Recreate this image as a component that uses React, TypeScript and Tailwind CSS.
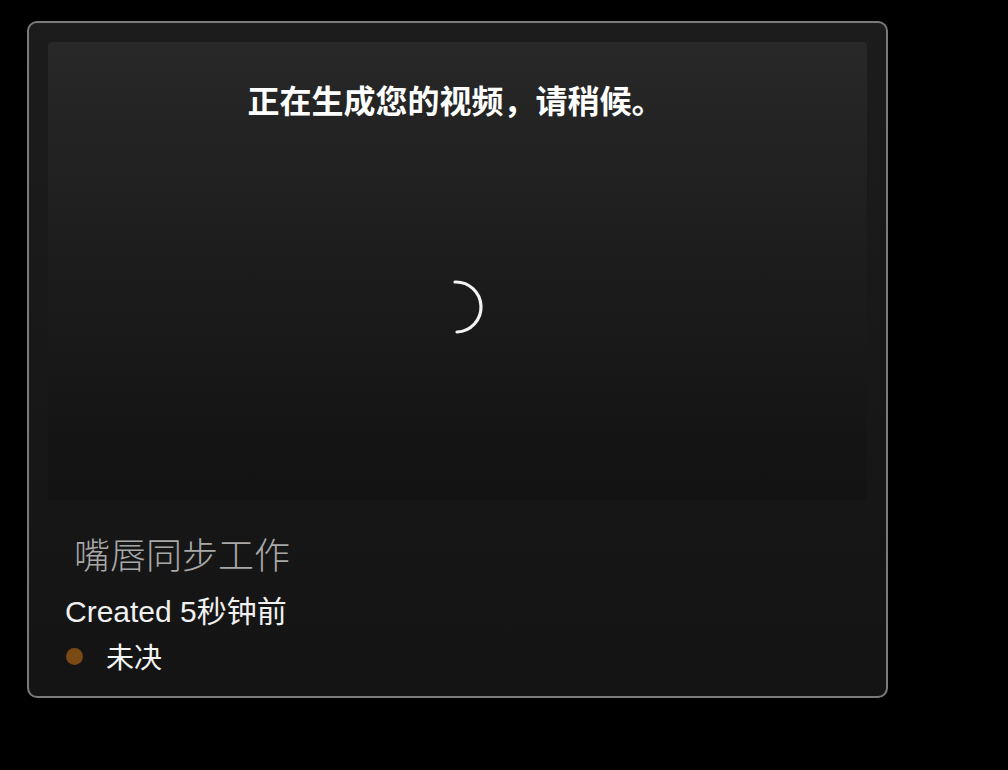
import React from 'react';

const cjk = { fontFamily: '"Noto Sans CJK SC", "Noto Sans", sans-serif' };
const mixed = { fontFamily: '"Liberation Sans", "Noto Sans CJK SC", sans-serif' };

function Spinner() {
  return (
    <svg width="60" height="60" viewBox="0 0 60 60" className="block">
      <path
        d="M26 5 A25 25 0 1 1 28 55"
        fill="none"
        stroke="#f2f2f2"
        strokeWidth="3.2"
        strokeLinecap="round"
      />
    </svg>
  );
}

export default function App() {
  return (
    <div className="w-[1008px] h-[770px] bg-black overflow-hidden" style={cjk}>
      <div className="ml-[27px] mt-[21px] w-[861px] h-[677px] rounded-[10px] border-2 border-[#7a7a7a] bg-gradient-to-b from-[#1c1c1c] to-[#141414] p-[19px] flex flex-col">
        {/* preview area */}
        <div className="h-[458px] rounded-[4px] bg-gradient-to-b from-[#282828] via-[#1c1c1c] to-[#121212] flex flex-col items-center">
          <div className="mt-[37px] pr-[4px] h-[40px] leading-[40px] text-[32px] font-bold text-white">
            正在生成您的视频，请稍候。
          </div>
          <div className="mt-[158px] ml-[2px]">
            <Spinner />
          </div>
        </div>

        {/* info */}
        <div className="pl-[26px] mt-[31px] h-[44px] leading-[44px] text-[36px] font-light text-[#a8a8a8]">
          嘴唇同步工作
        </div>
        <div className="pl-[17px] mt-[19px] h-[36px] leading-[36px] text-[30px] text-[#f0f0f0]" style={mixed}>
          Created 5秒钟前
        </div>
        <div className="pl-[18px] mt-[10px] h-[32px] flex items-center gap-[23px]">
          <span className="w-[17px] h-[17px] rounded-full bg-[#7b4a14]" />
          <span className="text-[28px] leading-[32px] text-[#f4f4f4]">未决</span>
        </div>
      </div>
    </div>
  );
}
